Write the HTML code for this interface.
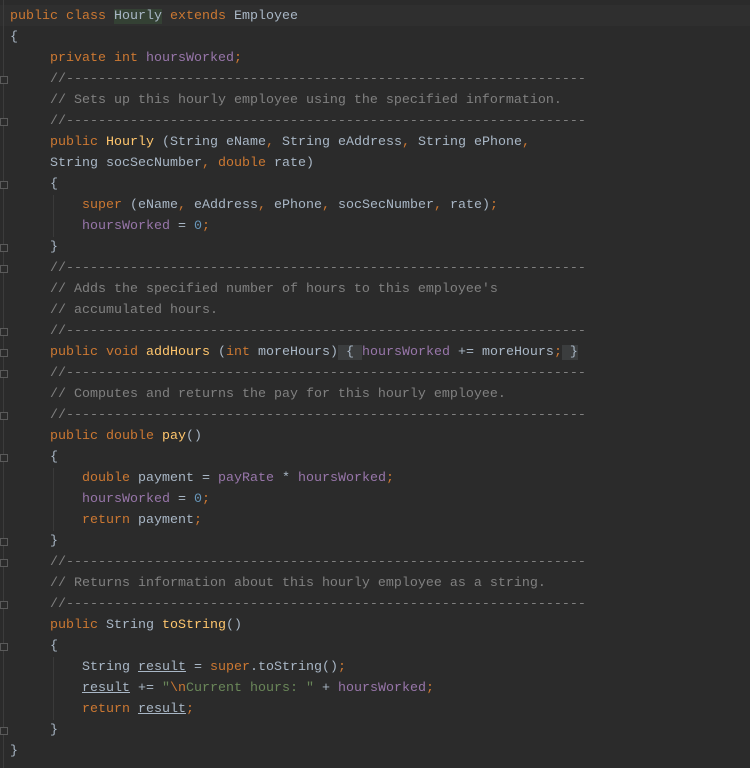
<!DOCTYPE html>
<html><head><style>
html,body{margin:0;padding:0;background:#2b2b2b;width:750px;height:768px;overflow:hidden}
.wrap{position:absolute;left:0;top:6px}
.l{position:relative;height:21px;line-height:21px;font-family:"Liberation Mono",monospace;font-size:13.33px;color:#a9b7c6;white-space:pre;padding-left:10px}
.k{color:#cc7832}.f{color:#9876aa}.c{color:#808080}.s{color:#6a8759}.n{color:#6897bb}.m{color:#ffc66d}
.hl{background:#344134}.fb{background:#3b3d3e}
.u{text-decoration:underline;text-decoration-color:#a9b7c6}
.gut{position:absolute;left:3px;top:0;width:1px;height:768px;background:#3c3c3c}
.g{position:absolute;left:53px;width:1px;background:#3a3a3a}
.fm{position:absolute;left:0;width:8px;height:8px;border:1px solid #5a5a5a;background:#2b2b2b;box-sizing:border-box}
.cur{position:absolute;left:0;top:5px;width:750px;height:21px;background:#2f2f2f}
</style></head><body>
<div class="cur"></div>
<div class="gut"></div>
<div class="g" style="top:195px;height:42px"></div>
<div class="g" style="top:468px;height:63px"></div>
<div class="g" style="top:657px;height:63px"></div>
<div class="wrap">
<div class="l"><span class="k">public class </span><span class="hl">Hourly</span><span class="k"> extends </span>Employee</div>
<div class="l">{</div>
<div class="l">     <span class="k">private int </span><span class="f">hoursWorked</span><span class="k">;</span></div>
<div class="l">     <span class="c">//-----------------------------------------------------------------</span></div>
<div class="l">     <span class="c">// Sets up this hourly employee using the specified information.</span></div>
<div class="l">     <span class="c">//-----------------------------------------------------------------</span></div>
<div class="l">     <span class="k">public </span><span class="m">Hourly</span> (String eName<span class="k">, </span>String eAddress<span class="k">, </span>String ePhone<span class="k">,</span></div>
<div class="l">     String socSecNumber<span class="k">, double </span>rate)</div>
<div class="l">     {</div>
<div class="l">         <span class="k">super </span>(eName<span class="k">, </span>eAddress<span class="k">, </span>ePhone<span class="k">, </span>socSecNumber<span class="k">, </span>rate)<span class="k">;</span></div>
<div class="l">         <span class="f">hoursWorked</span> = <span class="n">0</span><span class="k">;</span></div>
<div class="l">     }</div>
<div class="l">     <span class="c">//-----------------------------------------------------------------</span></div>
<div class="l">     <span class="c">// Adds the specified number of hours to this employee's</span></div>
<div class="l">     <span class="c">// accumulated hours.</span></div>
<div class="l">     <span class="c">//-----------------------------------------------------------------</span></div>
<div class="l">     <span class="k">public void </span><span class="m">addHours</span> (<span class="k">int </span>moreHours)<span class="fb"> { </span><span class="f">hoursWorked</span> += moreHours<span class="k">;</span><span class="fb"> }</span></div>
<div class="l">     <span class="c">//-----------------------------------------------------------------</span></div>
<div class="l">     <span class="c">// Computes and returns the pay for this hourly employee.</span></div>
<div class="l">     <span class="c">//-----------------------------------------------------------------</span></div>
<div class="l">     <span class="k">public double </span><span class="m">pay</span>()</div>
<div class="l">     {</div>
<div class="l">         <span class="k">double </span>payment = <span class="f">payRate</span> * <span class="f">hoursWorked</span><span class="k">;</span></div>
<div class="l">         <span class="f">hoursWorked</span> = <span class="n">0</span><span class="k">;</span></div>
<div class="l">         <span class="k">return </span>payment<span class="k">;</span></div>
<div class="l">     }</div>
<div class="l">     <span class="c">//-----------------------------------------------------------------</span></div>
<div class="l">     <span class="c">// Returns information about this hourly employee as a string.</span></div>
<div class="l">     <span class="c">//-----------------------------------------------------------------</span></div>
<div class="l">     <span class="k">public </span>String <span class="m">toString</span>()</div>
<div class="l">     {</div>
<div class="l">         String <span class="u">result</span> = <span class="k">super</span>.toString()<span class="k">;</span></div>
<div class="l">         <span class="u">result</span> += <span class="s">"<span class="k">\n</span>Current hours: "</span> + <span class="f">hoursWorked</span><span class="k">;</span></div>
<div class="l">         <span class="k">return </span><span class="u">result</span><span class="k">;</span></div>
<div class="l">     }</div>
<div class="l">}</div>
</div>
<div class="fm" style="top:76px"></div><div class="fm" style="top:118px"></div>
<div class="fm" style="top:181px"></div><div class="fm" style="top:244px"></div>
<div class="fm" style="top:265px"></div><div class="fm" style="top:328px"></div>
<div class="fm" style="top:349px"></div>
<div class="fm" style="top:370px"></div><div class="fm" style="top:412px"></div>
<div class="fm" style="top:454px"></div><div class="fm" style="top:538px"></div>
<div class="fm" style="top:559px"></div><div class="fm" style="top:601px"></div>
<div class="fm" style="top:643px"></div><div class="fm" style="top:727px"></div>
</body></html>
